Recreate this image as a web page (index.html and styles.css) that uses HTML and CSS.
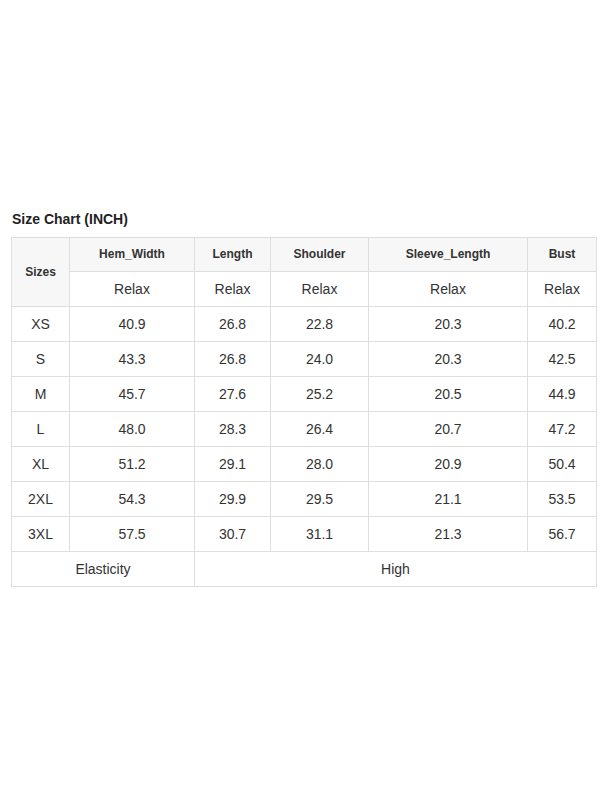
FILE: index.html
```html
<!DOCTYPE html>
<html>
<head>
<meta charset="utf-8">
<link rel="stylesheet" href="styles.css">
</head>
<body>
<div class="wrap">
  <div class="title">Size Chart (INCH)</div>
  <table class="chart">
    <colgroup>
      <col class="c1"><col class="c2"><col class="c3"><col class="c4"><col class="c5"><col class="c6">
    </colgroup>
    <thead>
      <tr class="h1">
        <th rowspan="2">Sizes</th>
        <th>Hem_Width</th>
        <th>Length</th>
        <th>Shoulder</th>
        <th>Sleeve_Length</th>
        <th>Bust</th>
      </tr>
      <tr class="h2">
        <td>Relax</td><td>Relax</td><td>Relax</td><td>Relax</td><td>Relax</td>
      </tr>
    </thead>
    <tbody>
      <tr><td>XS</td><td>40.9</td><td>26.8</td><td>22.8</td><td>20.3</td><td>40.2</td></tr>
      <tr><td>S</td><td>43.3</td><td>26.8</td><td>24.0</td><td>20.3</td><td>42.5</td></tr>
      <tr><td>M</td><td>45.7</td><td>27.6</td><td>25.2</td><td>20.5</td><td>44.9</td></tr>
      <tr><td>L</td><td>48.0</td><td>28.3</td><td>26.4</td><td>20.7</td><td>47.2</td></tr>
      <tr><td>XL</td><td>51.2</td><td>29.1</td><td>28.0</td><td>20.9</td><td>50.4</td></tr>
      <tr><td>2XL</td><td>54.3</td><td>29.9</td><td>29.5</td><td>21.1</td><td>53.5</td></tr>
      <tr><td>3XL</td><td>57.5</td><td>30.7</td><td>31.1</td><td>21.3</td><td>56.7</td></tr>
      <tr><td colspan="2">Elasticity</td><td colspan="4">High</td></tr>
    </tbody>
  </table>
</div>
</body>
</html>
```
FILE: styles.css
```css
html, body {
  margin: 0;
  padding: 0;
  background: #fff;
}
.wrap {
  padding: 209px 0 0 11px;
  font-family: "Liberation Sans", Arial, sans-serif;
  color: #333;
}
.title {
  font-size: 14px;
  font-weight: bold;
  line-height: 20px;
  height: 20px;
  margin: 0 0 8px 1px;
  color: #222;
}
.chart {
  border-collapse: collapse;
  table-layout: fixed;
  width: 585px;
}
.c1 { width: 58px; }
.c2 { width: 125px; }
.c3 { width: 76px; }
.c4 { width: 98px; }
.c5 { width: 159px; }
.c6 { width: 69px; }
.chart th, .chart td {
  border: 1px solid #dedede;
  text-align: center;
  vertical-align: middle;
  padding: 0;
  font-size: 14px;
  height: 34px;
  color: #333;
}
.chart th {
  background: #f7f7f7;
  font-size: 12px;
  font-weight: bold;
}
.chart .h1 th {
  height: 32px;
  padding-bottom: 1px;
}
.chart .h2 td {
  background: #fff;
}
```
